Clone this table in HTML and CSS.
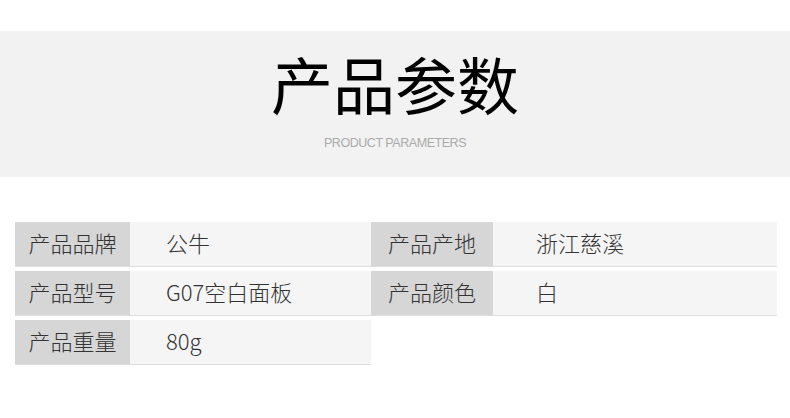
FILE: index.html
```html
<!DOCTYPE html>
<html lang="zh-CN">
<head>
<meta charset="utf-8">
<link rel="stylesheet" href="styles.css">
</head>
<body>
<div class="page">
  <header class="banner">
    <h1 class="title">产品参数</h1>
    <p class="subtitle">PRODUCT PARAMETERS</p>
  </header>
  <section class="params">
    <div class="item left"><div class="label">产品品牌</div><div class="value">公牛</div></div>
    <div class="item right"><div class="label">产品产地</div><div class="value">浙江慈溪</div></div>
    <div class="item left"><div class="label">产品型号</div><div class="value">G07空白面板</div></div>
    <div class="item right"><div class="label">产品颜色</div><div class="value">白</div></div>
    <div class="item left"><div class="label">产品重量</div><div class="value">80g</div></div>
  </section>
</div>
</body>
</html>
```

FILE: styles.css
```css
* { box-sizing: border-box; }
html, body { margin: 0; padding: 0; background: #fff; }
body { font-family: "Noto Sans CJK SC", "Noto Sans", sans-serif; }
.page { width: 790px; padding-top: 31px; }
.banner {
  height: 146px;
  background: #f2f2f2;
  display: flex;
  flex-direction: column;
  align-items: center;
  padding-top: 12px;
}
.title {
  margin: 0;
  font-size: 62px;
  font-weight: 400;
  line-height: 80px;
  color: #000;
}
.subtitle {
  margin: 0;
  margin-top: 12px;
  font-family: "Liberation Sans", Arial, sans-serif;
  font-size: 12.5px;
  line-height: 16px;
  color: #aaaaaa;
  letter-spacing: -0.45px;
}
.params {
  margin: 45px 0 0 15px;
  display: grid;
  grid-template-columns: 356px 406px;
  row-gap: 4px;
}
.item {
  display: flex;
  height: 45px;
  border-bottom: 1px solid #dedede;
  font-size: 22px;
  font-weight: 300;
  color: #333;
  line-height: 41px;
}
.label {
  background: #d6d6d6;
  text-align: center;
}
.value {
  flex: 1;
  background: #f5f5f5;
}
.left .label { width: 115px; }
.left .value { padding-left: 36px; }
.right .label { width: 122px; }
.right .value { padding-left: 43px; }
```
